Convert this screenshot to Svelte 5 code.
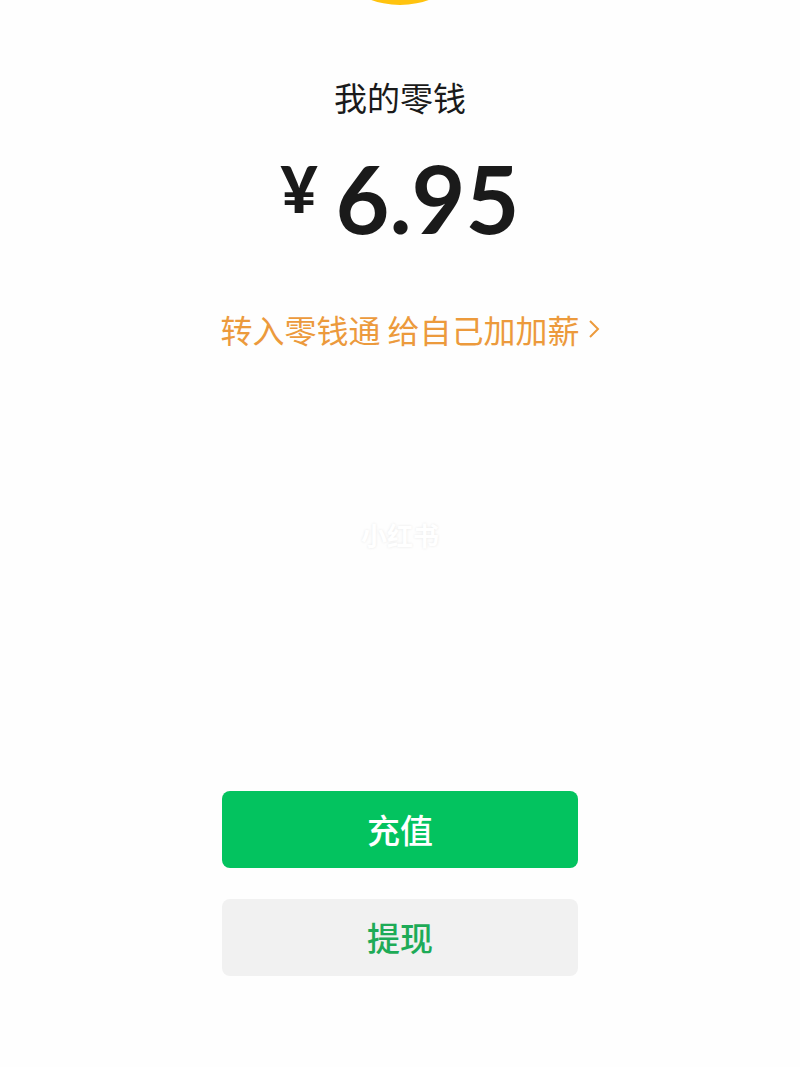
<script lang="ts">
  let balance = 6.95;

  const actions = [
    { id: 'recharge', label: '充值' },
    { id: 'withdraw', label: '提现' },
  ];
</script>

<main class="wallet">
  <svg class="coin" viewBox="0 0 160 6" aria-hidden="true">
    <circle cx="80" cy="-80" r="85" fill="#ffc30f" />
  </svg>

  <h1>我的零钱</h1>
  <p class="balance">
    <span class="currency">¥</span>
    <span class="amount">{balance.toFixed(2)}</span>
  </p>

  <a class="promo" href="#lqt">
    <span>转入零钱通 给自己加加薪</span>
    <svg viewBox="0 0 12 20" aria-hidden="true">
      <path d="M2 2l8 8-8 8" fill="none" stroke="currentColor" stroke-width="2" />
    </svg>
  </a>

  <div class="actions">
    {#each actions as action (action.id)}
      <button type="button" class={action.id}>{action.label}</button>
    {/each}
  </div>

  <span class="watermark">小红书</span>
</main>

<style>
  :global(body) {
    background: #fefefe;
  }
  .wallet {
    position: relative;
    display: flex;
    flex-direction: column;
    align-items: center;
    min-height: 100vh;
    box-sizing: border-box;
    padding-bottom: 91px;
    color: #1a1a1a;
    font-family: 'Noto Sans CJK SC', sans-serif;
  }
  .coin {
    display: block;
    width: 160px;
    height: 6px;
  }
  h1 {
    margin: 67px 0 0;
    font-size: 33px;
    font-weight: 400;
    line-height: 48px;
  }
  .balance {
    display: flex;
    align-items: flex-start;
    gap: 18px;
    margin: 22px 0 0;
    font-family: Lato, sans-serif;
    font-weight: 700;
  }
  .currency {
    font-size: 64px;
    font-weight: 900;
    line-height: 92px;
  }
  .amount {
    font-size: 93px;
    line-height: 110px;
  }
  /* the label stays centred, the arrow hangs off its right side */
  .promo {
    display: grid;
    grid-template-columns: 1fr auto 1fr;
    align-items: center;
    gap: 8px;
    margin-top: 52px;
    color: #ec9a3c;
    font-size: 32px;
    line-height: 48px;
    text-decoration: none;
  }
  .promo span {
    grid-column: 2;
  }
  .promo svg {
    width: 12px;
    height: 20px;
  }
  .actions {
    display: flex;
    flex-direction: column;
    gap: 31px;
    width: 44.5%;
    margin-top: auto;
  }
  button {
    height: 77px;
    padding: 0 0 2px;
    border: 0;
    border-radius: 8px;
    font-family: inherit;
    font-size: 33px;
    font-weight: 500;
    cursor: pointer;
  }
  .recharge {
    background: #03c35f;
    color: #fff;
  }
  .withdraw {
    background: #f1f1f1;
    color: #1eab57;
  }
  .watermark {
    position: absolute;
    top: 50%;
    left: 50%;
    transform: translate(-50%, -50%);
    color: #fff;
    font-size: 26px;
    font-weight: 700;
    text-shadow: 0 0 3px #e8e8e8;
    pointer-events: none;
  }
</style>
